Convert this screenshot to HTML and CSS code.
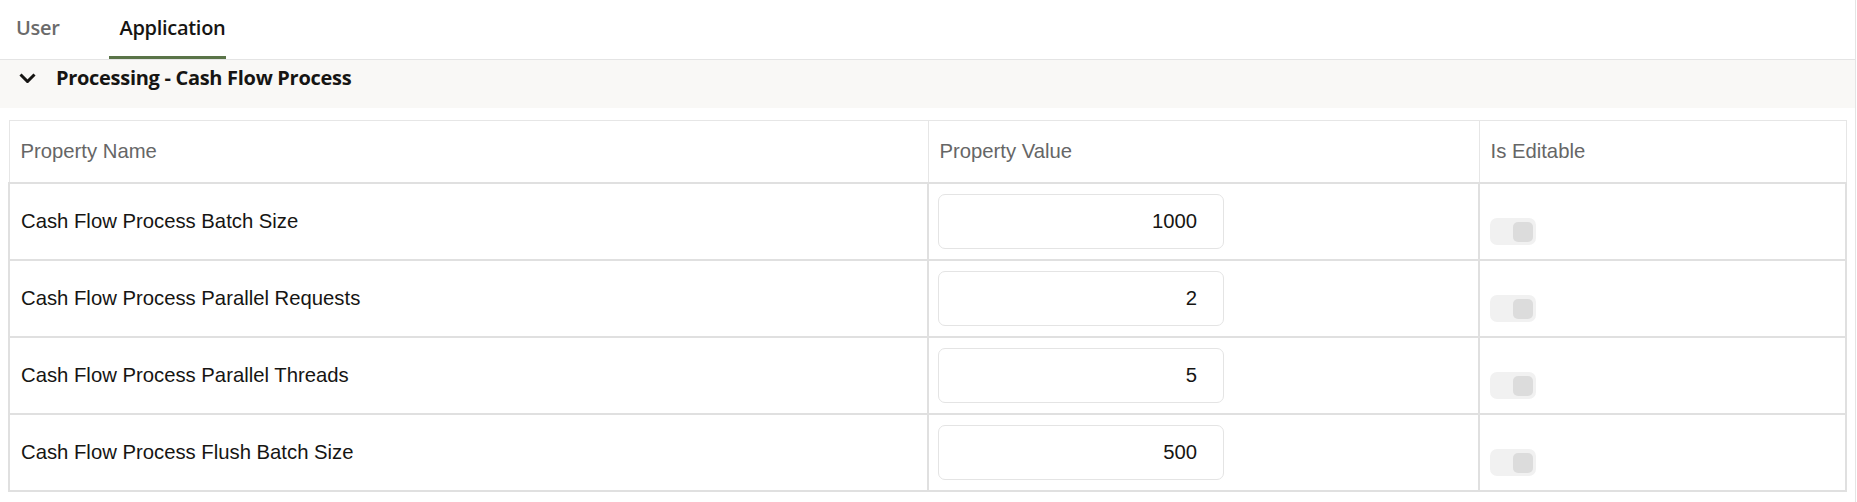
FILE: index.html
```html
<!DOCTYPE html>
<html lang="en">

<head>
    <meta charset="UTF-8">
    <meta name="viewport" content="width=device-width, initial-scale=1.0">
    <title>Application Properties</title>
    <link rel="stylesheet" href="styles.css">
</head>

<body>
    <div class="panel">
        <!-- Tabs -->
        <nav class="tabs">
            <span class="tab">User</span>
            <span class="tab active">Application</span>
        </nav>

        <!-- Section -->
        <div class="section-head">
            <svg class="chevron" width="17" height="10" viewBox="0 0 17 10">
                <path d="M1.5 1.5 L8.5 8.5 L15.5 1.5" fill="none" stroke="#161513" stroke-width="3" />
            </svg>
            <span class="section-title">Processing - Cash Flow Process</span>
        </div>

        <table class="props">
            <colgroup>
                <col class="col-name">
                <col class="col-value">
                <col class="col-edit">
            </colgroup>
            <thead>
                <tr>
                    <th>Property Name</th>
                    <th>Property Value</th>
                    <th>Is Editable</th>
                </tr>
            </thead>
            <tbody>
                <tr>
                    <td>Cash Flow Process Batch Size</td>
                    <td><input class="value" type="text" value="1000"></td>
                    <td class="edit"><span class="toggle"><span class="knob"></span></span></td>
                </tr>
                <tr>
                    <td>Cash Flow Process Parallel Requests</td>
                    <td><input class="value" type="text" value="2"></td>
                    <td class="edit"><span class="toggle"><span class="knob"></span></span></td>
                </tr>
                <tr>
                    <td>Cash Flow Process Parallel Threads</td>
                    <td><input class="value" type="text" value="5"></td>
                    <td class="edit"><span class="toggle"><span class="knob"></span></span></td>
                </tr>
                <tr>
                    <td>Cash Flow Process Flush Batch Size</td>
                    <td><input class="value" type="text" value="500"></td>
                    <td class="edit"><span class="toggle"><span class="knob"></span></span></td>
                </tr>
            </tbody>
        </table>
    </div>
</body>

</html>
```

FILE: styles.css
```css
/* Page */
body {
    margin: 0;
    background-color: #ffffff;
    font-family: "Liberation Sans", Arial, sans-serif;
}

.panel {
    width: 1855px;
    height: 502px;
    border-right: 1px solid #e4e4e4;
}

/* Tabs */
.tabs {
    display: flex;
    border-bottom: 1px solid #e4e4e4;
    font-family: "Open Sans", sans-serif;
    font-size: 20px;
    font-weight: 600;
    letter-spacing: -0.3px;
}

.tab {
    padding: 14px 0 15px;
    line-height: 27px;
    color: #6b6b6b;
    border-bottom: 3px solid transparent;
}

.tab:first-child {
    margin-left: 16px;
    margin-right: 49px;
}

.tab.active {
    color: #161513;
    padding-left: 11px;
    padding-right: 1px;
    border-bottom-color: #5a7448;
}

/* Section Header */
.section-head {
    display: flex;
    align-items: flex-start;
    height: 48px;
    background-color: #f9f8f6;
    font-family: "Open Sans", sans-serif;
}

.chevron {
    margin: 13px 20px 0 19px;
}

.section-title {
    margin-top: 4px;
    line-height: 27px;
    font-size: 20px;
    font-weight: 700;
    letter-spacing: -0.3px;
    color: #161513;
}

/* Table */
.props {
    margin: 12px 0 0 8px;
    width: 1837px;
    border-collapse: collapse;
    table-layout: fixed;
    font-size: 20.3px;
}

.col-name {
    width: 919px;
}

.col-value {
    width: 551px;
}

.col-edit {
    width: 367px;
}

.props th {
    height: 61px;
    padding: 0 11px;
    text-align: left;
    font-weight: 400;
    color: #666666;
    border: 1px solid #e6e6e6;
}

.props tbody tr {
    height: 77px;
}

.props td {
    padding: 0 11px;
    color: #161513;
    border: 2px solid #e0e0e0;
}

/* Value Input */
.value {
    display: block;
    box-sizing: border-box;
    width: 286px;
    height: 55px;
    margin-left: -2px;
    padding: 0 26px 0 0;
    border: 1px solid #e4e4e4;
    border-radius: 7px;
    text-align: right;
    font-family: "Liberation Sans", Arial, sans-serif;
    font-size: 20.3px;
    color: #161513;
    background-color: #ffffff;
}

/* Toggle */
.props td.edit {
    padding-top: 20px;
    padding-left: 10px;
}

.toggle {
    display: flex;
    justify-content: flex-end;
    align-items: center;
    box-sizing: border-box;
    width: 46px;
    height: 27px;
    padding-right: 3px;
    border-radius: 7px;
    background-color: #f1f1f1;
}

.knob {
    width: 20px;
    height: 20px;
    border-radius: 5px;
    background-color: #dcdcdc;
}
```
